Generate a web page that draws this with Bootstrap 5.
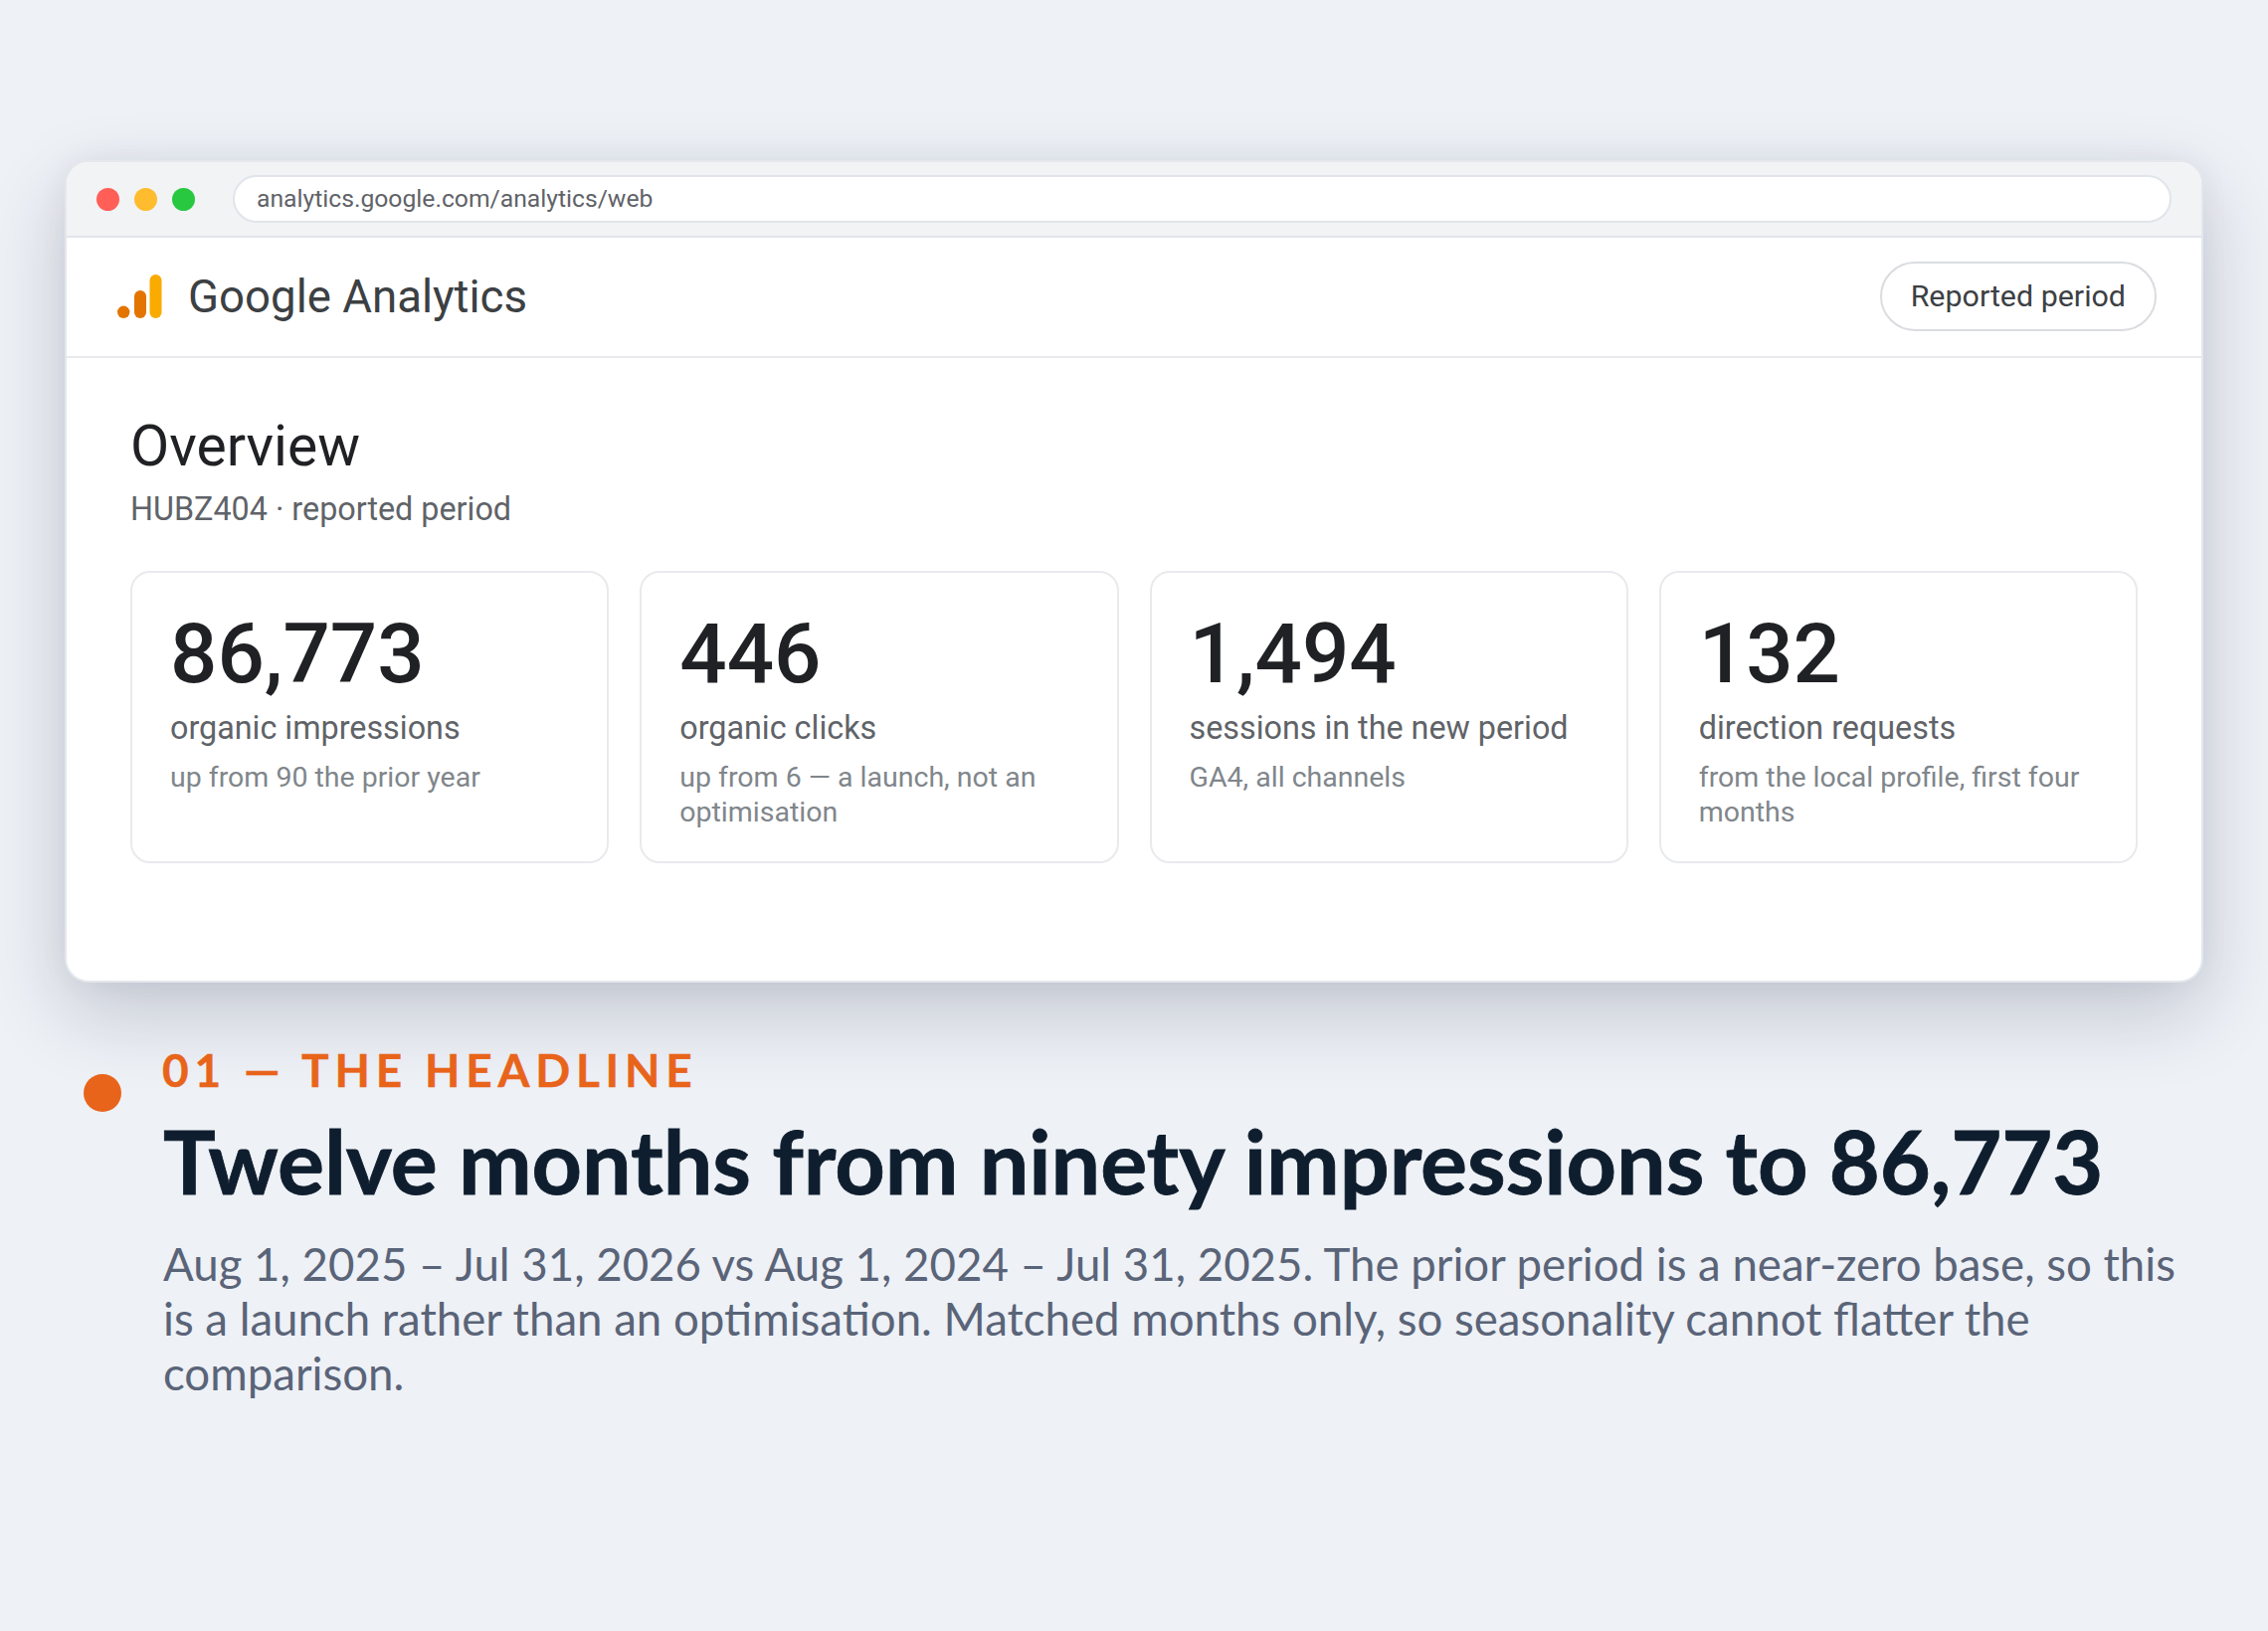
<!doctype html>
<html lang="en">
<head>
<meta charset="utf-8">
<title>The headline</title>
<link href="https://cdn.jsdelivr.net/npm/bootstrap@5.3.0/dist/css/bootstrap.min.css" rel="stylesheet">
<style>
html,body{height:100%}
body{background:#eef1f6;font-family:"Lato","Liberation Sans",sans-serif;width:2280px;height:1640px;overflow:hidden}
.stage{padding:161px 65px 0}
.browser{height:827px;background:#fff;border-radius:24px;border:2px solid #e4e7ec;box-shadow:0 30px 80px rgba(20,30,55,.2),0 0 30px rgba(20,30,55,.05);overflow:hidden;font-family:"Roboto",sans-serif;margin-bottom:60px}
.chromebar{height:76px;background:#f1f3f5;border-bottom:2px solid #e1e4ea;padding:0 30px;gap:15px}
.tl{width:23px;height:23px;border-radius:50%}
.urlbox{height:48px;flex:1;margin-left:23px;background:#fff;border:2px solid #e1e4ea;border-radius:24px;padding:0 22px;font-size:24.7px;color:#5f6368;line-height:44px}
.gahead{height:121px;border-bottom:2px solid #e8eaed;padding:0 45px 2px 51px}
.gatitle{font-size:45.6px;color:#3c4043;margin-left:26px;margin-top:2px;line-height:1}
.pillbtn{height:70px;padding:0 29px;border:2px solid #dadce0;border-radius:35px;font-size:30.4px;color:#3c4043;background:#fff;line-height:66px}
.gabody{padding:55px 64px}
.ovtitle{font-size:57px;font-weight:400;color:#202124;line-height:1.2;margin:0}
.ovsub{font-size:32.3px;color:#5f6368;line-height:1.2;margin-top:10px;margin-bottom:42px}
.kpis{display:grid;grid-template-columns:repeat(4,1fr);gap:31px}
.kpi{height:294px;border:2px solid #e8eaed;border-radius:20px;padding:36px 38px}
.kpinum{font-size:83.4px;font-weight:500;color:#202124;line-height:1.1}
.kpilabel{font-size:32.3px;color:#5f6368;line-height:1.2;margin-top:9px}
.kpinote{font-size:28.5px;color:#80868b;line-height:35px;margin-top:12px}
.story{padding-left:19px;gap:42px}
.dot{width:38px;height:38px;border-radius:50%;background:#e8641b;margin-top:32px;flex:none}
.eyebrow{font-size:46px;font-weight:700;color:#e8641b;letter-spacing:5.8px;-webkit-text-stroke:.4px #e8641b;line-height:1.2;margin-left:-1px}
.headline{font-size:88px;font-weight:700;letter-spacing:-.06px;-webkit-text-stroke:.8px #0f1e2e;color:#0f1e2e;line-height:1.2;margin:12px 0 0}
.desc{font-size:45.6px;color:#5a6478;line-height:55px;margin-top:22px}
</style>
</head>
<body>
<div class="stage">
  <div class="browser">
    <div class="chromebar d-flex align-items-center">
      <span class="tl" style="background:#ff5f57"></span>
      <span class="tl" style="background:#febc2e"></span>
      <span class="tl" style="background:#28c840"></span>
      <div class="urlbox">analytics.google.com/analytics/web</div>
    </div>
    <div class="gahead d-flex align-items-center justify-content-between">
      <div class="d-flex align-items-center">
        <svg width="45" height="44" viewBox="0 0 45 44"><circle cx="6.2" cy="37.8" r="6.2" fill="#e37400"/><rect x="17" y="16" width="12" height="28" rx="6" fill="#e37400"/><rect x="32.5" y="0" width="12" height="44" rx="6" fill="#f9ab00"/></svg>
        <span class="gatitle">Google Analytics</span>
      </div>
      <span class="pillbtn">Reported period</span>
    </div>
    <div class="gabody">
      <h1 class="ovtitle">Overview</h1>
      <div class="ovsub">HUBZ404 · reported period</div>
      <div class="kpis">
        <div class="kpi"><div class="kpinum">86,773</div><div class="kpilabel">organic impressions</div><div class="kpinote">up from 90 the prior year</div></div>
        <div class="kpi"><div class="kpinum">446</div><div class="kpilabel">organic clicks</div><div class="kpinote">up from 6 — a launch, not an optimisation</div></div>
        <div class="kpi"><div class="kpinum">1,494</div><div class="kpilabel">sessions in the new period</div><div class="kpinote">GA4, all channels</div></div>
        <div class="kpi"><div class="kpinum">132</div><div class="kpilabel">direction requests</div><div class="kpinote">from the local profile, first four months</div></div>
      </div>
    </div>
  </div>
  <div class="story d-flex">
    <span class="dot"></span>
    <div>
      <div class="eyebrow">01 — THE HEADLINE</div>
      <h2 class="headline">Twelve months from ninety impressions to 86,773</h2>
      <div class="desc">Aug 1, 2025 – Jul 31, 2026 vs Aug 1, 2024 – Jul 31, 2025. The prior period is a near-zero base, so this is a launch rather than an optimisation. Matched months only, so seasonality cannot flatter the comparison.</div>
    </div>
  </div>
</div>
<script src="https://cdn.jsdelivr.net/npm/bootstrap@5.3.0/dist/js/bootstrap.bundle.min.js"></script>
</body>
</html>
